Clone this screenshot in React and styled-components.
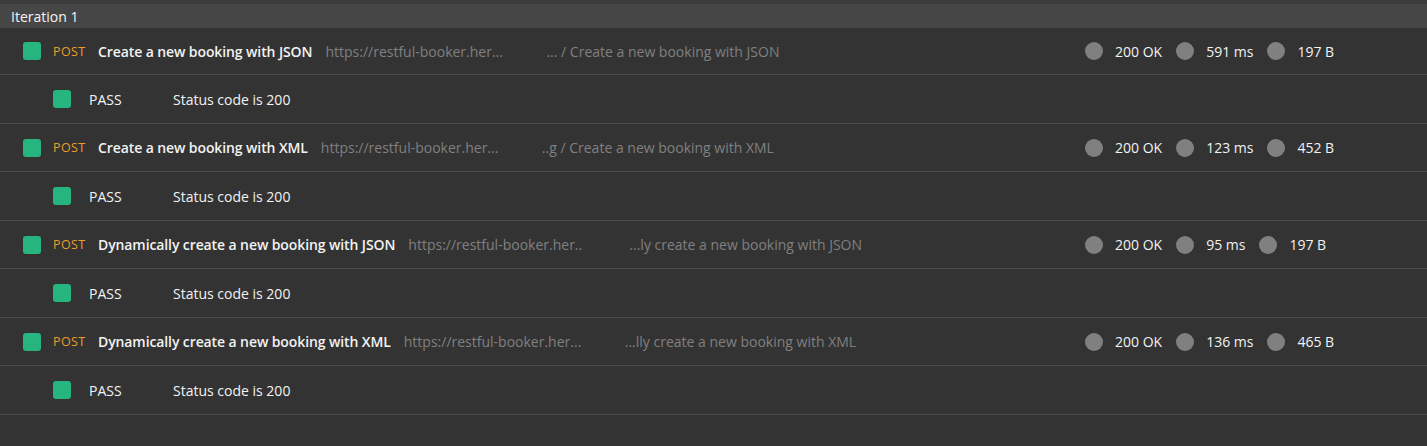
import React from "react";
import styled, { createGlobalStyle } from "styled-components";

const Global = createGlobalStyle`
  html, body { margin: 0; padding: 0; background: #333333; }
  body { font-family: "Open Sans", "Liberation Sans", sans-serif; color: #f0f0f0; }
`;

const Page = styled.div`
  width: 1427px;
  height: 446px;
  background: #333333;
  display: flex;
  flex-direction: column;
  overflow: hidden;
`;

const TopStrip = styled.div`
  height: 4px;
  background: #3b3b3b;
`;

const Header = styled.div`
  height: 24px;
  background: #464646;
  display: flex;
  align-items: center;
  padding-left: 11px;
  font-size: 14px;
  color: #f4f4f4;
`;

const Row = styled.div`
  height: ${(p) => p.$h}px;
  border-bottom: 1px solid #4a4a4a;
  display: grid;
  grid-template-columns: 1fr 342px;
  align-items: center;
`;

const Left = styled.div`
  display: flex;
  align-items: center;
  padding-left: ${(p) => p.$indent}px;
  white-space: nowrap;
  min-width: 0;
`;

const Square = styled.span`
  width: 18px;
  height: 18px;
  border-radius: 3px;
  background: #26b47f;
  flex: none;
`;

const Method = styled.span`
  margin-left: 12px;
  font-size: 12.5px;
  letter-spacing: 0.4px;
  color: #eb9c2b;
  width: 33px;
`;

const Name = styled.span`
  margin-left: 12px;
  font-size: 14px;
  font-weight: 600;
  letter-spacing: -0.1px;
  color: #f2f2f2;
`;

const Url = styled.span`
  margin-left: 13px;
  width: 221px;
  flex: none;
  font-size: 14px;
  color: #808080;
  overflow: hidden;
`;

const Path = styled.span`
  font-size: 14px;
  color: #808080;
`;

const Result = styled.span`
  margin-left: 18px;
  width: 84px;
  font-size: 14px;
  font-weight: 500;
  color: #f2f2f2;
`;

const TestName = styled.span`
  font-size: 14px;
  font-weight: 500;
  color: #f2f2f2;
`;

const Stats = styled.div`
  display: flex;
  align-items: center;
  white-space: nowrap;
`;

const Dot = styled.span`
  width: 18px;
  height: 18px;
  border-radius: 50%;
  background: #808080;
  flex: none;
  margin-left: ${(p) => (p.$first ? 0 : 14)}px;
`;

const StatText = styled.span`
  margin-left: 12px;
  font-size: 14px;
  font-weight: 500;
  color: #f2f2f2;
`;

const requests = [
  {
    name: "Create a new booking with JSON",
    url: "https://restful-booker.her...",
    path: "... / Create a new booking with JSON",
    time: "591 ms",
    size: "197 B",
  },
  {
    name: "Create a new booking with XML",
    url: "https://restful-booker.her...",
    path: "..g / Create a new booking with XML",
    time: "123 ms",
    size: "452 B",
  },
  {
    name: "Dynamically create a new booking with JSON",
    url: "https://restful-booker.her..",
    path: "...ly create a new booking with JSON",
    time: "95 ms",
    size: "197 B",
  },
  {
    name: "Dynamically create a new booking with XML",
    url: "https://restful-booker.her...",
    path: "...lly create a new booking with XML",
    time: "136 ms",
    size: "465 B",
  },
];

export default function App() {
  return (
    <Page>
      <Global />
      <TopStrip />
      <Header>Iteration 1</Header>
      {requests.map((r, i) => (
        <React.Fragment key={i}>
          <Row $h={i === 0 ? 46 : 47}>
            <Left $indent={23}>
              <Square />
              <Method>POST</Method>
              <Name>{r.name}</Name>
              <Url>{r.url}</Url>
              <Path>{r.path}</Path>
            </Left>
            <Stats>
              <Dot $first />
              <StatText>200 OK</StatText>
              <Dot />
              <StatText>{r.time}</StatText>
              <Dot />
              <StatText>{r.size}</StatText>
            </Stats>
          </Row>
          <Row $h={48}>
            <Left $indent={53}>
              <Square />
              <Result>PASS</Result>
              <TestName>Status code is 200</TestName>
            </Left>
            <div />
          </Row>
        </React.Fragment>
      ))}
    </Page>
  );
}
